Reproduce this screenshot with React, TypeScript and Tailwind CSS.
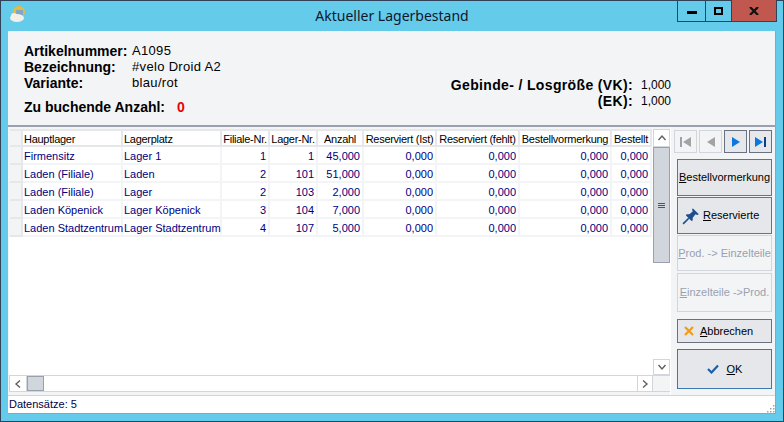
import React from 'react'

const columns = ['Hauptlager', 'Lagerplatz', 'Filiale-Nr.', 'Lager-Nr.', 'Anzahl', 'Reserviert (Ist)', 'Reserviert (fehlt)', 'Bestellvormerkung', 'Bestellt']

const rows = [
  ['Firmensitz', 'Lager 1', '1', '1', '45,000'],
  ['Laden (Filiale)', 'Laden', '2', '101', '51,000'],
  ['Laden (Filiale)', 'Lager', '2', '103', '2,000'],
  ['Laden Köpenick', 'Lager Köpenick', '3', '104', '7,000'],
  ['Laden Stadtzentrum', 'Lager Stadtzentrum', '4', '107', '5,000'],
]

const gridCols = 'grid grid-cols-[14px_100px_99px_48px_48px_46px_73px_83px_92px_40px]'

function Triangle({ dir, color }: { dir: 'l' | 'r'; color: string }) {
  return (
    <svg width="8" height="10" viewBox="0 0 8 10">
      <path d={dir === 'r' ? 'M0 0 L8 5 L0 10 Z' : 'M8 0 L0 5 L8 10 Z'} fill={color} />
    </svg>
  )
}

function NavButton({ enabled, children }: { enabled: boolean; children: React.ReactNode }) {
  return (
    <div className={`w-[23px] h-[23px] flex items-center justify-center border ${enabled ? 'bg-gray-200 border-gray-500' : 'bg-gray-100 border-gray-300'}`}>
      {children}
    </div>
  )
}

function Chevron({ d }: { d: string }) {
  return (
    <svg width="10" height="10" viewBox="0 0 10 10" fill="none" stroke="#606060" strokeWidth="1.4">
      <path d={d} />
    </svg>
  )
}

export default function App() {
  return (
    <div className="w-[784px] h-[422px] bg-[#65cbeb] outline outline-1 -outline-offset-1 outline-slate-700 relative flex flex-col overflow-hidden text-[11px] text-black" style={{ fontFamily: '"Liberation Sans", sans-serif' }}>
      {/* Title bar */}
      <div className="h-[31px] shrink-0 flex items-center justify-center relative">
        <svg className="absolute left-2 top-1" width="20" height="20" viewBox="0 0 20 20">
          <circle cx="11" cy="8" r="6" fill="#e8b93a" />
          <rect x="8" y="6" width="7" height="5" fill="#7fa6c9" />
          <ellipse cx="9" cy="14" rx="7" ry="4" fill="#f1efe8" />
          <circle cx="6" cy="12" r="3" fill="#f1efe8" />
        </svg>
        <span className="text-sm text-slate-900" style={{ fontFamily: '"Noto Sans", sans-serif' }}>Aktueller Lagerbestand</span>
        <div className="absolute right-[7px] top-0 h-[22px] flex border border-t-0 border-slate-700">
          <div className="w-7 flex items-center justify-center border-r border-slate-700">
            <div className="w-[10px] h-[3px] bg-black mt-1" />
          </div>
          <div className="w-[26px] flex items-center justify-center border-r border-slate-700">
            <div className="w-[9px] h-2 border-2 border-black" />
          </div>
          <div className="w-11 flex items-center justify-center bg-[#c0584f]">
            <svg width="10" height="8" viewBox="0 0 10 8" stroke="#111" strokeWidth="2.2">
              <path d="M1 0 L9 8 M9 0 L1 8" />
            </svg>
          </div>
        </div>
      </div>

      <div className="flex-1 mx-2 mb-2 flex flex-col min-h-0 bg-gray-100 border-r border-b border-gray-400">
        {/* Article header */}
        <div className="h-24 shrink-0 pl-4 pt-3 pr-[104px] flex justify-between border-b-2 border-gray-400">
          <div>
            <div className="grid grid-cols-[108px_1fr] text-sm leading-4">
              <span className="font-bold">Artikelnummer:</span>
              <span className="text-[13px] tracking-wide">A1095</span>
              <span className="font-bold">Bezeichnung:</span>
              <span className="text-[13px] tracking-wide">#velo Droid A2</span>
              <span className="font-bold">Variante:</span>
              <span className="text-[13px] tracking-wide">blau/rot</span>
            </div>
            <div className="flex gap-3 mt-2 text-sm font-bold leading-4">
              <span>Zu buchende Anzahl:</span>
              <span className="text-red-600">0</span>
            </div>
          </div>
          <div className="self-end pb-4 grid grid-cols-[auto_auto] gap-x-2 text-sm leading-4">
            <span className="font-bold text-right tracking-wide">Gebinde- / Losgröße (VK):</span>
            <span className="text-xs">1,000</span>
            <span className="font-bold text-right tracking-wide">(EK):</span>
            <span className="text-xs">1,000</span>
          </div>
        </div>

        <div className="flex-1 min-h-0 flex">
          {/* Data grid */}
          <div className="w-[663px] pl-px pt-[2px] pb-[3px] border-r border-white flex flex-col">
            <div className="flex-1 min-h-0 flex bg-white">
              <div className="flex-1">
                <div className={`${gridCols} h-[18px] items-stretch`}>
                  <div className="bg-gray-100 border-2 border-gray-200 border-l-gray-100" />
                  {columns.map((c, i) => (
                    <div key={c} className={`border-2 border-l-0 border-gray-200 leading-4 tracking-tight whitespace-nowrap overflow-hidden ${i > 1 ? 'text-center' : 'pl-px'}`}>{c}</div>
                  ))}
                </div>
                {rows.map((r, idx) => (
                  <div key={idx} className={`${gridCols} h-[18px] text-[#000080] leading-[18px]`}>
                    <div className="bg-gray-100 border-2 border-t-0 border-gray-200 border-l-gray-100" />
                    {[...r, '0,000', '0,000', '0,000', '0,000'].map((v, i) => (
                      <div key={i} className={`h-[18px] border-b-2 border-r-2 border-gray-100 whitespace-nowrap ${i > 1 ? 'text-right pr-[2px]' : 'pl-px'}`}>{v}</div>
                    ))}
                  </div>
                ))}
              </div>
              {/* Vertical scrollbar */}
              <div className="w-[17px] flex flex-col bg-white">
                <div className="h-[18px] flex items-center justify-center border border-gray-300">
                  <Chevron d="M1.5 7 L5 3 L8.5 7" />
                </div>
                <div className="h-[116px] bg-gray-300 border border-gray-400 flex flex-col items-center justify-center gap-px">
                  <div className="w-[7px] h-px bg-gray-600" />
                  <div className="w-[7px] h-px bg-gray-600" />
                  <div className="w-[7px] h-px bg-gray-600" />
                </div>
                <div className="flex-1" />
                <div className="h-4 flex items-center justify-center border border-gray-300">
                  <Chevron d="M1.5 3 L5 7 L8.5 3" />
                </div>
              </div>
            </div>
            {/* Horizontal scrollbar */}
            <div className="h-[17px] flex border-t border-b border-gray-300">
              <div className="w-[18px] bg-white flex items-center justify-center border-x border-gray-300">
                <Chevron d="M7 1.5 L3 5 L7 8.5" />
              </div>
              <div className="w-[17px] bg-gray-300 border border-gray-400" />
              <div className="flex-1 bg-white" />
              <div className="w-4 bg-white flex items-center justify-center border-x border-gray-300">
                <Chevron d="M3 1.5 L7 5 L3 8.5" />
              </div>
              <div className="w-[17px] bg-gray-100" />
            </div>
          </div>

          {/* Action buttons */}
          <div className="flex-1 pt-[3px] pl-[3px] flex flex-col">
            <div className="flex gap-[2px] mb-[6px]">
              <NavButton enabled={false}>
                <div className="flex items-center gap-px"><div className="w-[2px] h-[10px] bg-gray-400" /><Triangle dir="l" color="#a3a3a3" /></div>
              </NavButton>
              <NavButton enabled={false}><Triangle dir="l" color="#a3a3a3" /></NavButton>
              <NavButton enabled><Triangle dir="r" color="#0a78dc" /></NavButton>
              <NavButton enabled>
                <div className="flex items-center gap-px"><Triangle dir="r" color="#0a78dc" /><div className="w-[2px] h-[10px] bg-[#0a3f8a]" /></div>
              </NavButton>
            </div>
            <div className="ml-[3px] w-[95px] flex flex-col gap-px">
              <div className="h-[37px] flex items-center justify-center bg-gray-200 border border-gray-500 whitespace-nowrap">
                <span><u>B</u>estellvormerkung</span>
              </div>
              <div className="h-[37px] flex items-center gap-[3px] pl-1 bg-gray-200 border border-gray-500">
                <svg width="18" height="18" viewBox="0 0 16 16">
                  <path d="M9.5 1 L15 6.5 L13.5 7 L12 6.5 L9.5 9.5 L9.5 12 L8.5 12.5 L3.5 7.5 L4 6.5 L6.5 6.5 L9.5 4 L9 2.5 Z" fill="#1f4e8c" />
                  <path d="M6 10 L1 15" stroke="#1f4e8c" strokeWidth="1.5" />
                </svg>
                <span><u>R</u>eservierte</span>
              </div>
              <div className="h-9 flex items-center justify-center bg-gray-100 border border-gray-300 text-gray-400 whitespace-nowrap">
                <span><u>P</u>rod. -&gt; Einzelteile</span>
              </div>
              <div className="h-[39px] mt-px flex items-center justify-center bg-gray-100 border border-gray-300 text-gray-400 whitespace-nowrap">
                <span><u>E</u>inzelteile -&gt;Prod.</span>
              </div>
              <div className="h-6 mt-[6px] flex items-center gap-[6px] pl-[6px] bg-gray-200 border border-gray-500">
                <svg width="10" height="10" viewBox="0 0 10 10" stroke="#f39c12" strokeWidth="2.2">
                  <path d="M1 1 L9 9 M9 1 L1 9" />
                </svg>
                <span><u>A</u>bbrechen</span>
              </div>
              <div className="h-10 mt-[5px] flex items-center justify-center gap-2 bg-gray-200 border border-[#3a78b4]">
                <svg width="12" height="10" viewBox="0 0 12 10" fill="none" stroke="#1f5fa8" strokeWidth="2.2">
                  <path d="M1 5 L4.5 8.5 L11 1.5" />
                </svg>
                <span><u>O</u>K</span>
              </div>
            </div>
          </div>
        </div>

        {/* Status bar */}
        <div className="h-[18px] shrink-0 bg-white border-t border-gray-300 pl-px leading-[16px] text-[#000040] flex justify-between">
          <span>Datensätze: 5</span>
          <svg className="self-end" width="8" height="8" viewBox="0 0 8 8" fill="#a3a3a3">
            <rect x="6" y="0" width="1.5" height="1.5" />
            <rect x="3" y="3" width="1.5" height="1.5" />
            <rect x="6" y="3" width="1.5" height="1.5" />
            <rect x="0" y="6" width="1.5" height="1.5" />
            <rect x="3" y="6" width="1.5" height="1.5" />
            <rect x="6" y="6" width="1.5" height="1.5" />
          </svg>
        </div>
      </div>
    </div>
  )
}
